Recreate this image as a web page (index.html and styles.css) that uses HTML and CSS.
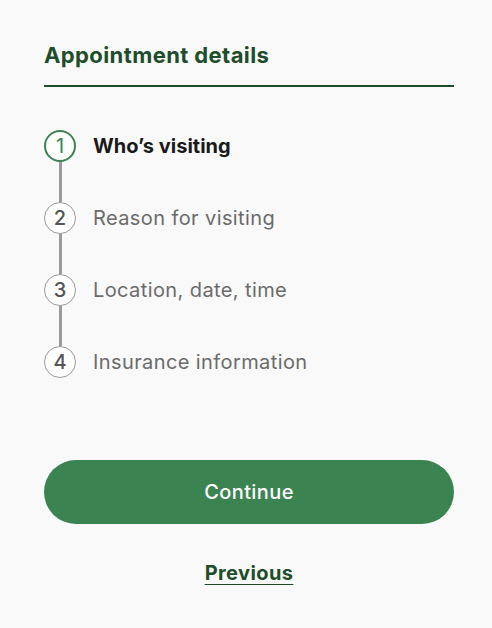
FILE: index.html
```html
<!DOCTYPE html>
<html>
<head>
  <title>Appointment details</title>
  <link rel="stylesheet" href="styles.css">
</head>
<body>
  <div class="container">
    <h2 class="title">Appointment details</h2>

    <ol class="steps">
      <li class="step active"><span class="num">1</span><span class="label">Who’s visiting</span></li>
      <li class="line"></li>
      <li class="step"><span class="num">2</span><span class="label">Reason for visiting</span></li>
      <li class="line"></li>
      <li class="step"><span class="num">3</span><span class="label">Location, date, time</span></li>
      <li class="line"></li>
      <li class="step"><span class="num">4</span><span class="label">Insurance information</span></li>
    </ol>

    <button class="continue">Continue</button>
    <a class="previous" href="#">Previous</a>
  </div>
</body>
</html>
```
FILE: styles.css
```css
body {
  margin: 0;
  background: #f9f9f9;
  font-family: "Inter", "Noto Sans", sans-serif;
  letter-spacing: 0.4px;
}

.container {
  padding: 42px 38px 0 44px;
}

.title {
  margin: 0;
  padding-bottom: 17px;
  border-bottom: 2px solid #1e4d2b;
  color: #1e4d2b;
  font-size: 22px;
  font-weight: 700;
  line-height: 26px;
}

.steps {
  list-style: none;
  margin: 0;
  padding: 0;
  margin-top: 43px;
}

.step {
  display: flex;
  align-items: center;
  height: 32px;
}

.num {
  box-sizing: border-box;
  width: 32px;
  height: 32px;
  border: 1px solid #9a9a9a;
  border-radius: 50%;
  background: #fff;
  display: flex;
  align-items: center;
  justify-content: center;
  color: #555;
  font-size: 20px;
  font-weight: 500;
  letter-spacing: 0;
}

.label {
  margin-left: 17px;
  color: #6b6b6b;
  font-size: 20px;
}

.step.active .num {
  border: 2px solid #3b8451;
  color: #3b8451;
  font-weight: 400;
}

.step.active .label {
  color: #1a1a1a;
  font-weight: 700;
  letter-spacing: 0;
}

.line {
  width: 3px;
  height: 40px;
  margin-left: 14.5px;
  background: #9a9a9a;
}

.continue {
  display: block;
  width: 100%;
  height: 64px;
  margin-top: 82px;
  border: none;
  border-radius: 32px;
  background: #3b8451;
  color: #fff;
  font-family: inherit;
  font-size: 20px;
  font-weight: 500;
  letter-spacing: 0.4px;
  cursor: pointer;
}

.previous {
  display: block;
  width: max-content;
  margin: 37px auto 0;
  color: #1e4d2b;
  font-size: 20px;
  font-weight: 700;
  text-decoration: underline;
  text-decoration-thickness: 2px;
  text-underline-offset: 4px;
}
```
